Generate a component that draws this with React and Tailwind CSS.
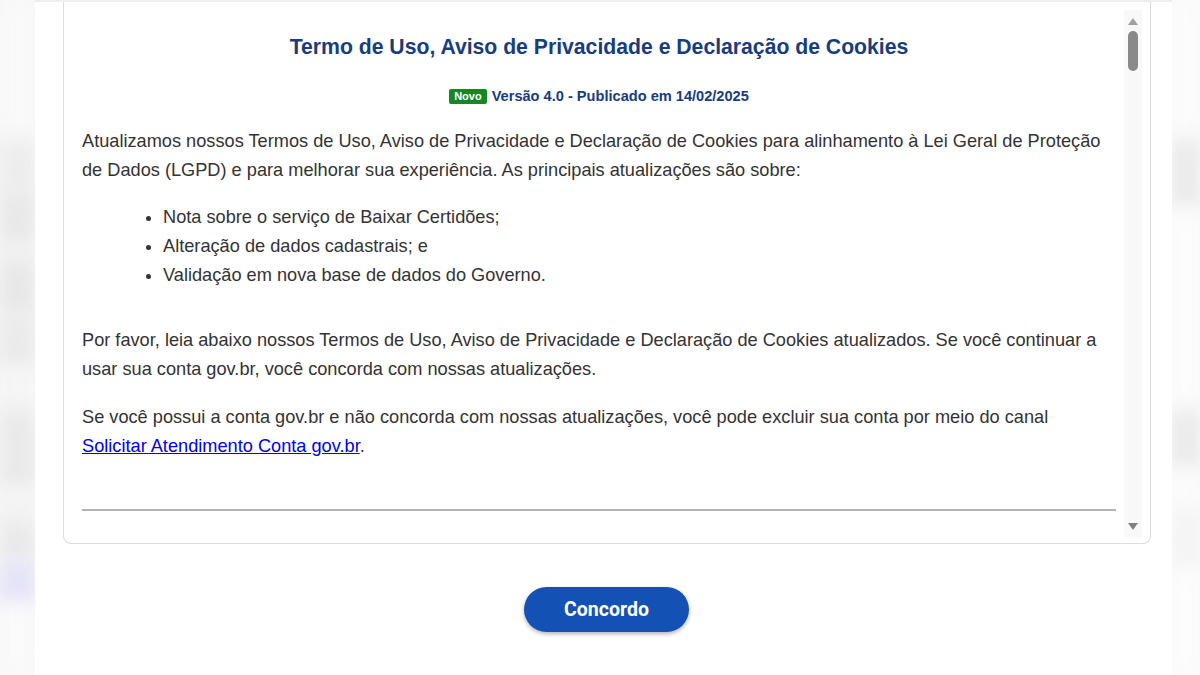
import React from "react";

function Strip({ bands, base }) {
  return (
    <div className="flex flex-col h-full overflow-hidden" style={{ background: base }}>
      {bands.map((b, i) => (
        <div key={i} style={{ height: b[0], background: b[1] }} className="blur-[10px] shrink-0" />
      ))}
    </div>
  );
}

export default function App() {
  const leftBands = [
    [140, "#f9f9f9"],
    [50, "#ececec"],
    [55, "#e7e7e7"],
    [15, "#f1f1f1"],
    [55, "#e6e6e6"],
    [55, "#e9e9e9"],
    [40, "#f5f5f5"],
    [80, "#e8e8e8"],
    [30, "#f4f4f4"],
    [40, "#e8e8e8"],
    [45, "#e2e2f8"],
    [70, "#fafafa"],
  ];
  const rightBands = [
    [140, "#fbfbfb"],
    [70, "#e8e8e8"],
    [200, "#fcfcfc"],
    [60, "#e8e8e8"],
    [40, "#fbfbfb"],
    [60, "#f3f3f3"],
    [105, "#fcfcfc"],
  ];
  return (
    <div className="w-[1200px] h-[675px] flex bg-[#f8f8f8] overflow-hidden" style={{ fontFamily: '"Liberation Sans", Arial, sans-serif' }}>
      <div className="w-[35px] h-full shrink-0">
        <Strip bands={leftBands} base="#f8f8f8" />
      </div>
      <div className="w-[1137px] h-full bg-white shrink-0 flex flex-col border-t-2 border-[#eeeeee]">
        <div className="ml-[28px] w-[1088px] h-[542px] border border-t-0 border-[#dcdcdc] rounded-b-[8px] flex">
          <div className="flex-1 pl-[18px] pr-[8px] pt-[31px] text-[#333333] text-[18.2px] leading-[29px]">
            <h1 className="text-center text-[21.2px] leading-[28px] font-bold text-[#183c7c]">
              Termo de Uso, Aviso de Privacidade e Declaração de Cookies
            </h1>
            <div className="mt-[26px] flex justify-center items-center gap-[5px] text-[14.6px] leading-[18px] font-bold text-[#183c7c]">
              <span className="bg-[#168821] text-white text-[11px] leading-[15px] px-[5px] rounded-[2px]">Novo</span>
              <span>Versão 4.0 - Publicado em 14/02/2025</span>
            </div>
            <p className="mt-[22px]">
              Atualizamos nossos Termos de Uso, Aviso de Privacidade e Declaração de Cookies para alinhamento à Lei Geral de Proteção de Dados (LGPD) e para melhorar sua experiência. As principais atualizações são sobre:
            </p>
            <ul className="mt-[18px] pl-[81px] list-disc">
              <li>Nota sobre o serviço de Baixar Certidões;</li>
              <li>Alteração de dados cadastrais; e</li>
              <li>Validação em nova base de dados do Governo.</li>
            </ul>
            <p className="mt-[36px]">
              Por favor, leia abaixo nossos Termos de Uso, Aviso de Privacidade e Declaração de Cookies atualizados. Se você continuar a usar sua conta gov.br, você concorda com nossas atualizações.
            </p>
            <p className="mt-[19px]">
              Se você possui a conta gov.br e não concorda com nossas atualizações, você pode excluir sua conta por meio do canal{" "}
              <a href="#" className="text-[#0000ee] underline">Solicitar Atendimento Conta gov.br</a>.
            </p>
            <div className="mt-[48px] h-[2px] bg-[#b4b4b4]" />
          </div>
          <div className="w-[18px] mr-[8px] mt-[8px] mb-[5px] bg-[#f8f8f8] flex flex-col items-center">
            <svg width="10" height="7" viewBox="0 0 10 7" className="mt-[8px]">
              <polygon points="5,0 10,7 0,7" fill="#a0a0a0" />
            </svg>
            <div className="mt-[6px] w-[10px] h-[40px] rounded-full bg-[#8a8a8a]" />
            <div className="flex-1" />
            <svg width="10" height="7" viewBox="0 0 10 7" className="mb-[8px]">
              <polygon points="0,0 10,0 5,7" fill="#808080" />
            </svg>
          </div>
        </div>
        <div className="flex justify-center mt-[43px] pl-[6px]">
          <button className="w-[165px] h-[45px] rounded-full bg-[#1351b4] text-white text-[19.5px] font-bold shadow-[0_2px_4px_rgba(0,0,0,0.3)]" style={{ fontFamily: 'Roboto, "Liberation Sans", sans-serif' }}>
            Concordo
          </button>
        </div>
      </div>
      <div className="w-[28px] h-full shrink-0">
        <Strip bands={rightBands} base="#fbfbfb" />
      </div>
    </div>
  );
}
